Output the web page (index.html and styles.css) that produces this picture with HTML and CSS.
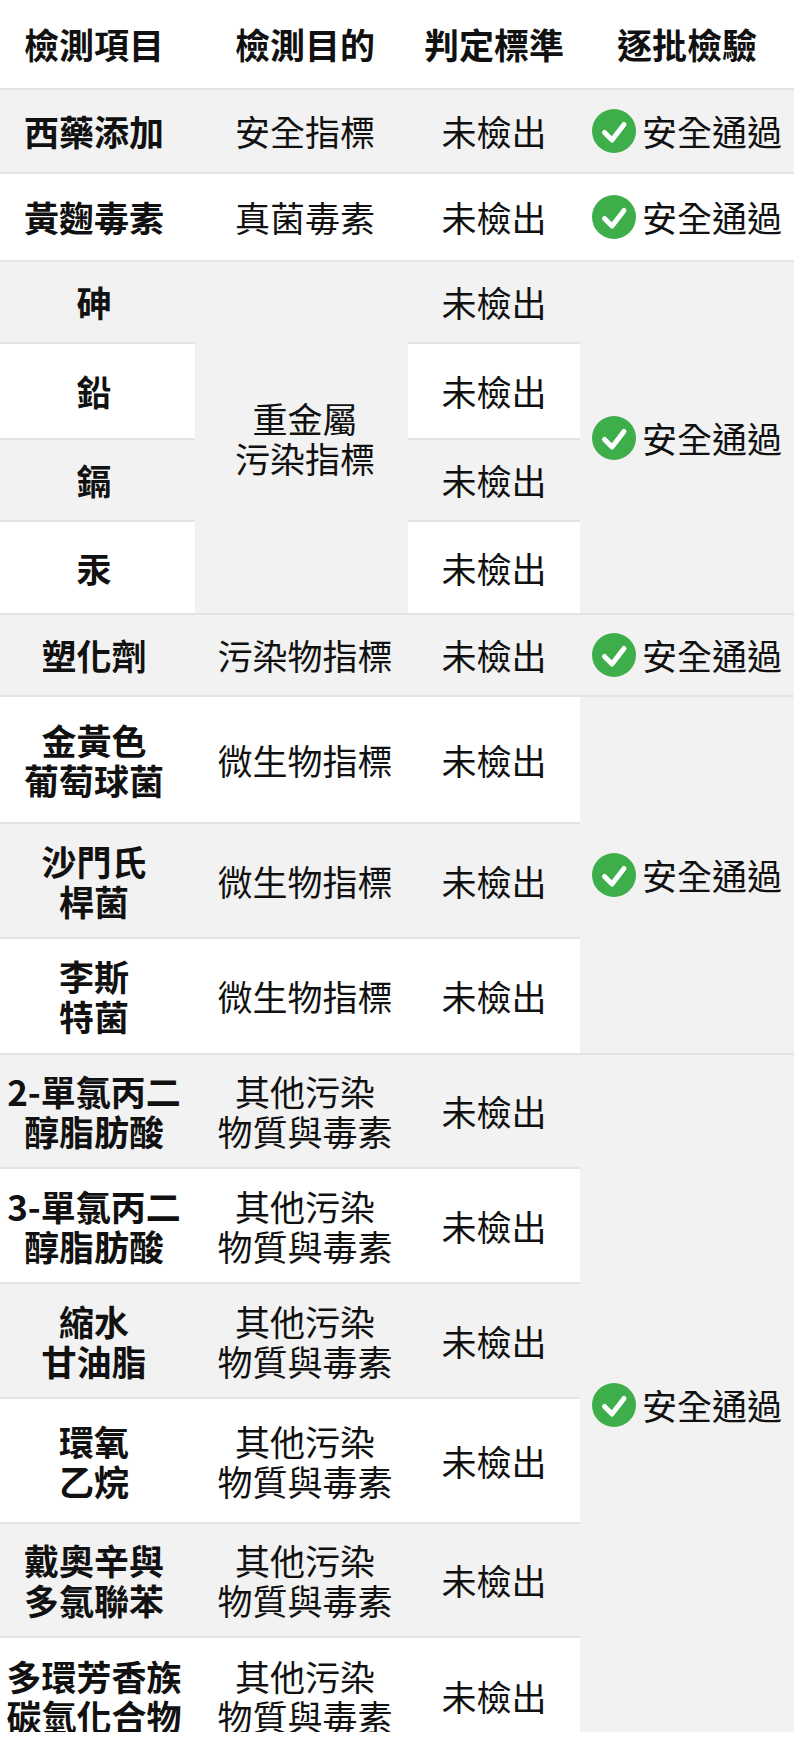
FILE: index.html
```html
<!DOCTYPE html>
<html lang="zh-Hant">
<head>
<meta charset="utf-8">
<title>檢測項目</title>
<link rel="stylesheet" href="styles.css">
</head>
<body>
<div class="wrap">
  <div class="grid">
    <div class="cell c1 hd">檢測項目</div>
    <div class="cell c2 hd">檢測目的</div>
    <div class="cell c3 hd">判定標準</div>
    <div class="cell c4 hd">逐批檢驗</div>

    <div class="cell c1 b g">西藥添加</div>
    <div class="cell c2 g">安全指標</div>
    <div class="cell c3 g">未檢出</div>
    <div class="cell c4 g"><svg class="ok" viewBox="0 0 44 44"><circle cx="22" cy="22" r="22"/><polyline points="12.5,23.5 20,31 32,15.5"/></svg>安全通過</div>

    <div class="cell c1 b">黃麴毒素</div>
    <div class="cell c2">真菌毒素</div>
    <div class="cell c3">未檢出</div>
    <div class="cell c4"><svg class="ok" viewBox="0 0 44 44"><circle cx="22" cy="22" r="22"/><polyline points="12.5,23.5 20,31 32,15.5"/></svg>安全通過</div>

    <div class="cell c1 b g">砷</div>
    <div class="cell c2 g span4">重金屬<br>污染指標</div>
    <div class="cell c3 g">未檢出</div>
    <div class="cell c4 g span4"><svg class="ok" viewBox="0 0 44 44"><circle cx="22" cy="22" r="22"/><polyline points="12.5,23.5 20,31 32,15.5"/></svg>安全通過</div>

    <div class="cell c1 b">鉛</div>
    <div class="cell c3">未檢出</div>

    <div class="cell c1 b g">鎘</div>
    <div class="cell c3 g">未檢出</div>

    <div class="cell c1 b">汞</div>
    <div class="cell c3">未檢出</div>

    <div class="cell c1 b g">塑化劑</div>
    <div class="cell c2 g">污染物指標</div>
    <div class="cell c3 g">未檢出</div>
    <div class="cell c4 g"><svg class="ok" viewBox="0 0 44 44"><circle cx="22" cy="22" r="22"/><polyline points="12.5,23.5 20,31 32,15.5"/></svg>安全通過</div>

    <div class="cell c1 b">金黃色<br>葡萄球菌</div>
    <div class="cell c2">微生物指標</div>
    <div class="cell c3">未檢出</div>
    <div class="cell c4 g span3"><svg class="ok" viewBox="0 0 44 44"><circle cx="22" cy="22" r="22"/><polyline points="12.5,23.5 20,31 32,15.5"/></svg>安全通過</div>

    <div class="cell c1 b g">沙門氏<br>桿菌</div>
    <div class="cell c2 g">微生物指標</div>
    <div class="cell c3 g">未檢出</div>

    <div class="cell c1 b">李斯<br>特菌</div>
    <div class="cell c2">微生物指標</div>
    <div class="cell c3">未檢出</div>

    <div class="cell c1 b g">2-單氯丙二<br>醇脂肪酸</div>
    <div class="cell c2 g">其他污染<br>物質與毒素</div>
    <div class="cell c3 g">未檢出</div>
    <div class="cell c4 g span6"><svg class="ok" viewBox="0 0 44 44"><circle cx="22" cy="22" r="22"/><polyline points="12.5,23.5 20,31 32,15.5"/></svg>安全通過</div>

    <div class="cell c1 b">3-單氯丙二<br>醇脂肪酸</div>
    <div class="cell c2">其他污染<br>物質與毒素</div>
    <div class="cell c3">未檢出</div>

    <div class="cell c1 b g">縮水<br>甘油脂</div>
    <div class="cell c2 g">其他污染<br>物質與毒素</div>
    <div class="cell c3 g">未檢出</div>

    <div class="cell c1 b">環氧<br>乙烷</div>
    <div class="cell c2">其他污染<br>物質與毒素</div>
    <div class="cell c3">未檢出</div>

    <div class="cell c1 b g">戴奧辛與<br>多氯聯苯</div>
    <div class="cell c2 g">其他污染<br>物質與毒素</div>
    <div class="cell c3 g">未檢出</div>

    <div class="cell c1 b">多環芳香族<br>碳氫化合物</div>
    <div class="cell c2">其他污染<br>物質與毒素</div>
    <div class="cell c3">未檢出</div>
  </div>
</div>
</body>
</html>
```
FILE: styles.css
```css
html, body {
  margin: 0;
  padding: 0;
  background: #ffffff;
}

body {
  font-family: "Noto Sans CJK TC", "Noto Sans CJK SC", "Noto Sans", sans-serif;
  color: #111111;
  font-size: 35px;
  line-height: 40px;
}

.wrap {
  width: 794px;
  height: 1732px;
  overflow: hidden;
}

.grid {
  display: grid;
  grid-template-columns: 195px 213px 172px 214px;
  grid-template-rows: 90px 84px 88px 82px 96px 82px 93px 82px 127px 115px 116px 114px 115px 115px 125px 114px 118px;
}

.cell {
  display: flex;
  align-items: center;
  justify-content: center;
  text-align: center;
  box-sizing: border-box;
  border-bottom: 2px solid #e4e4e4;
  background: #ffffff;
  white-space: nowrap;
}

.c1 { grid-column: 1; padding-right: 7px; }
.c2 { grid-column: 2; padding-left: 7px; }
.c3 { grid-column: 3; }
.c4 { grid-column: 4; }

.g { background: #f2f2f2; }
.b, .hd { font-weight: 700; }

.span3 { grid-row-end: span 3; }
.span4 { grid-row-end: span 4; }
.span6 { grid-row-end: span 6; }

.ok {
  width: 44px;
  height: 44px;
  flex: none;
  margin-right: 6px;
}

.ok circle {
  fill: #3dae4a;
}

.ok polyline {
  fill: none;
  stroke: #ffffff;
  stroke-width: 5;
  stroke-linecap: round;
  stroke-linejoin: round;
}
```
